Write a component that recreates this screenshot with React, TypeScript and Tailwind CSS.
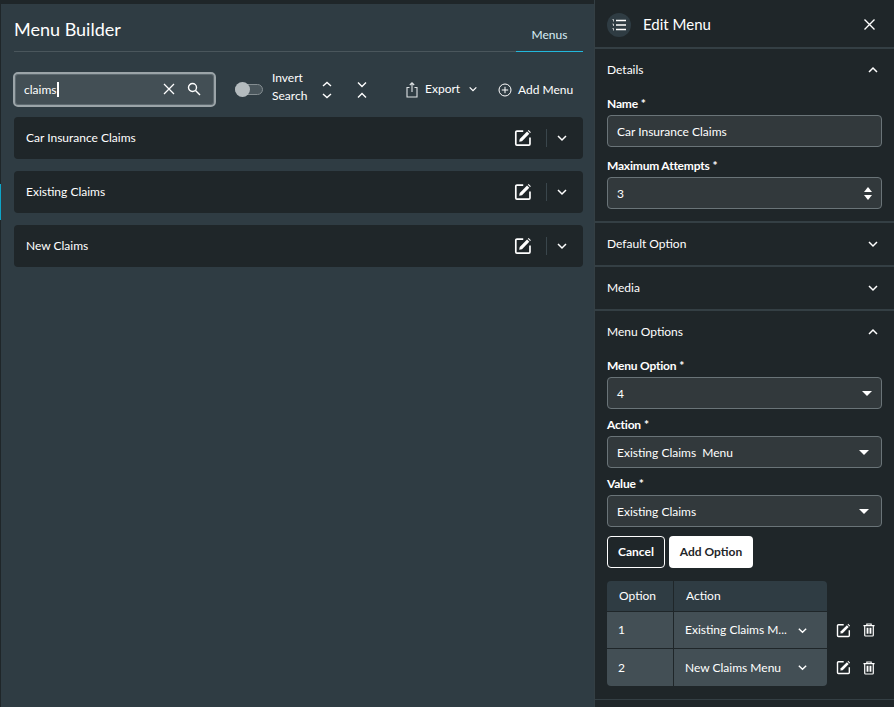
import React from "react";

const Chev = ({ up = false, size = 12, className = "" }: { up?: boolean; size?: number; className?: string }) => (
  <svg width={size} height={size} viewBox="0 0 12 12" fill="none" stroke="currentColor" strokeWidth="1.5" className={className}>
    <path d={up ? "M2 8 L6 4 L10 8" : "M2 4 L6 8 L10 4"} />
  </svg>
);

const EditIcon = ({ size = 18 }: { size?: number }) => (
  <svg width={size} height={size} viewBox="0 0 16 16" fill="none">
    <path d="M8.2 1.9H2.6a1 1 0 0 0-1 1v10.5a1 1 0 0 0 1 1h10.6a1 1 0 0 0 1-1V7.6" stroke="currentColor" strokeWidth="1.5" />
    <path d="M4.6 11.3l.5-2.5L11.6 2.3l2 2L7.1 10.8z" fill="currentColor" />
    <path d="M12.3 1.6l.7-.7 2 2-.7.7z" fill="currentColor" />
  </svg>
);

const TrashIcon = () => (
  <svg width="12" height="14" viewBox="0 0 14 16" fill="none" stroke="currentColor" strokeWidth="1.4">
    <path d="M0.5 3h13M4.5 3V1h5v2M2 3v11a1 1 0 0 0 1 1h8a1 1 0 0 0 1-1V3" />
    <path d="M5.3 5.5v7M8.7 5.5v7" strokeWidth="2.2" />
  </svg>
);

const Row = ({ label }: { label: string }) => (
  <div className="flex h-[42px] items-center rounded bg-[#1f2629] pl-3 pr-[15px]">
    <span className="flex-1 text-[12px] text-white">{label}</span>
    <span className="text-white"><EditIcon /></span>
    <span className="ml-[14px] mr-[9px] h-[18px] w-px bg-[#3a464c]" />
    <Chev className="text-white" />
  </div>
);

const Caret = () => <span className="h-0 w-0 border-x-[5px] border-t-[5px] border-x-transparent border-t-white" />;

const Field = ({ label, value, kind, wide, className = "" }: { label: string; value: string; kind?: "select" | "number"; wide?: boolean; className?: string }) => (
  <div className={className}>
    <div className="h-[22px] text-[12px] font-bold leading-[22px] tracking-[-0.2px] text-white">{label}<span className="ml-[3px]">*</span></div>
    <div className={`flex h-8 items-center rounded border border-[#6a7478] bg-[#32393c] pl-[9px] text-[12px] text-white ${wide ? "pr-[12px]" : "pr-[9px]"}`}>
      <span className="flex-1 whitespace-pre pt-px">{value}</span>
      {kind === "select" && <Caret />}
      {kind === "number" && (
        <span className="flex flex-col gap-[3px]">
          <span className="h-0 w-0 border-x-[4.5px] border-b-[5px] border-x-transparent border-b-white" />
          <span className="h-0 w-0 border-x-[4.5px] border-t-[5px] border-x-transparent border-t-white" />
        </span>
      )}
    </div>
  </div>
);

const Section = ({ title, open, thin, children }: { title: string; open?: boolean; thin?: boolean; children?: React.ReactNode }) => (
  <div className={`px-3 ${thin ? "border-b border-[#343f44]" : "border-b-2 border-[#343f44]"}`}>
    <div className="flex h-[42px] items-center justify-between pr-[3px] text-[12px] text-white">
      <span>{title}</span>
      <Chev up={open} />
    </div>
    {children}
  </div>
);

export default function App() {
  return (
    <div className="flex h-[707px] w-[894px] overflow-hidden bg-[#1f2629] text-white [font-family:Lato,'Liberation_Sans',sans-serif]">
      <div className="relative w-px shrink-0">
        <div className="absolute left-0 top-[184px] h-[36px] w-px bg-[#0ea5c9]" />
      </div>
      <main className="mt-1 flex w-[593px] shrink-0 flex-col bg-[#2f3c43] pl-[13px] pr-[11px]">
        <div className="flex h-[48px] items-end justify-between border-b border-[#4a565c]">
          <h1 className="mb-[10px] text-[18px] leading-6 text-white">Menu Builder</h1>
          <div className="mb-[-1px] flex h-[30px] w-[67px] items-center justify-center border-b border-[#22b8dc] pb-[3px] text-[12px] text-[#d8eef5]">Menus</div>
        </div>
        <div className="mt-[20px] flex h-[35px] items-center">
          <div className="ml-[-1px] flex h-[35px] w-[203px] shrink-0 items-center rounded-[5px] border-[2px] border-[#9ba4a8] bg-[#434f55] pb-px pl-[9px] pr-[13px] text-[12px] shadow-[inset_0_0_0_1px_#5e6a70]">
            <span className="flex-1">claims<span className="ml-px inline-block h-[15px] w-[1.5px] translate-y-[3px] bg-white" /></span>
            <svg width="12" height="12" viewBox="0 0 12 12" stroke="currentColor" strokeWidth="1.3"><path d="M1 1L11 11M11 1L1 11" /></svg>
            <svg width="14" height="14" viewBox="0 0 14 14" fill="none" stroke="currentColor" strokeWidth="1.4" className="ml-[12px]"><circle cx="5.5" cy="5.5" r="4" /><path d="M8.5 8.5L13 13" /></svg>
          </div>
          <div className="relative ml-[19px] h-[11px] w-[28px] rounded-full border border-[#848d91] bg-[#4a565c]">
            <span className="absolute left-[-1px] top-[-3px] h-[15px] w-[15px] rounded-full bg-[#b4bbbe]" />
          </div>
          <div className="ml-[9px] w-[50px] pb-[5px] text-[12px] leading-[18px]">Invert Search</div>
          <svg width="10" height="18" viewBox="0 0 10 18" fill="none" stroke="currentColor" strokeWidth="1.4"><path d="M1 5L5 1.5L9 5M1 13L5 16.5L9 13" /></svg>
          <svg width="10" height="18" viewBox="0 0 10 18" fill="none" stroke="currentColor" strokeWidth="1.4" className="ml-[25px]"><path d="M1 1.5L5 5.5L9 1.5M1 16.5L5 12.5L9 16.5" /></svg>
          <svg width="12" height="16" viewBox="0 0 12 16" fill="none" stroke="currentColor" strokeWidth="1.1" className="ml-[39px] text-[#dfe3e5]"><path d="M3.5 5.5H1v9.5h10V5.5H8.5M6 10V1M3.8 3L6 .8 8.2 3" /></svg>
          <span className="ml-[7px] w-[36px] pb-[2px] text-[12px]">Export</span>
          <Chev size={10} className="mb-[2px] ml-[7px]" />
          <svg width="14" height="14" viewBox="0 0 14 14" fill="none" stroke="currentColor" strokeWidth="1" className="ml-[20px]"><circle cx="7" cy="7" r="6" /><path d="M7 3.8v6.4M3.8 7h6.4" /></svg>
          <span className="ml-[6px] text-[12px]">Add Menu</span>
        </div>
        <div className="mt-[10px] flex flex-col gap-3">
          <Row label="Car Insurance Claims" />
          <Row label="Existing Claims" />
          <Row label="New Claims" />
        </div>
      </main>
      <aside className="h-[707px] flex-1 overflow-hidden border-l border-[#343f44]">
        <div className="flex h-[49px] items-center border-b-2 border-[#343f44] pl-3 pr-[19px] pt-[2px]">
          <span className="flex h-6 w-6 items-center justify-center rounded-full bg-[#2f3c43]">
            <svg width="14" height="12" viewBox="0 0 14 12" fill="none" stroke="currentColor"><path d="M4 1.5h10M4 6h10M4 10.5h10" strokeWidth="1.4" /><path d="M0.5 0.5h1v2M0.5 5h1v2M0.5 9.5h1v2" strokeWidth="0.7" /></svg>
          </span>
          <span className="ml-[12px] flex-1 text-[15px]">Edit Menu</span>
          <svg width="11" height="11" viewBox="0 0 11 11" stroke="currentColor" strokeWidth="1.4"><path d="M.5.5l10 10M10.5.5l-10 10" /></svg>
        </div>
        <Section title="Details" open>
          <div className="pb-3 pt-[2px]">
            <Field label="Name" value="Car Insurance Claims" />
            <Field label="Maximum Attempts" value="3" kind="number" className="mt-[8px]" />
          </div>
        </Section>
        <Section title="Default Option" />
        <Section title="Media" />
        <Section title="Menu Options" open thin>
          <div className="pt-[2px]">
            <Field label="Menu Option" value="4" kind="select" />
            <Field label="Action" value="Existing Claims  Menu" kind="select" wide className="mt-[5px]" />
            <Field label="Value" value="Existing Claims" kind="select" wide className="mt-[5px]" />
          </div>
          <div className="mt-[9px] flex gap-1 text-[12px] font-bold">
            <button className="h-8 w-[58px] rounded border border-white">Cancel</button>
            <button className="h-8 w-[84px] rounded bg-white text-[#1f2629]">Add Option</button>
          </div>
          <div className="mt-[13px] pb-[13px] text-[12px]">
            <div className="grid w-[220px] grid-cols-[66px_153px] gap-px">
              <div className="flex h-[30px] items-center rounded-tl bg-[#2f3c43] pl-[12px]">Option</div>
              <div className="flex h-[30px] items-center rounded-tr bg-[#2f3c43] pl-[12px]">Action</div>
            </div>
            {[
              ["1", "Existing Claims M..."],
              ["2", "New Claims Menu"],
            ].map(([n, a], i) => (
              <div key={n} className="mt-px flex items-center">
                <div className={`grid w-[220px] grid-cols-[66px_153px] gap-px ${i === 0 ? "h-[36px]" : "h-[37px]"}`}>
                  <div className={`flex items-center bg-[#434f55] pl-[11px] ${i === 1 ? "rounded-bl" : ""}`}>{n}</div>
                  <div className={`flex items-center justify-between bg-[#434f55] pl-[11px] pr-[19px] ${i === 1 ? "rounded-br" : ""}`}>
                    <span>{a}</span>
                    <Chev size={11} />
                  </div>
                </div>
                <span className="ml-[9px]"><EditIcon size={15} /></span>
                <span className="ml-[12px]"><TrashIcon /></span>
              </div>
            ))}
          </div>
        </Section>
      </aside>
    </div>
  );
}
